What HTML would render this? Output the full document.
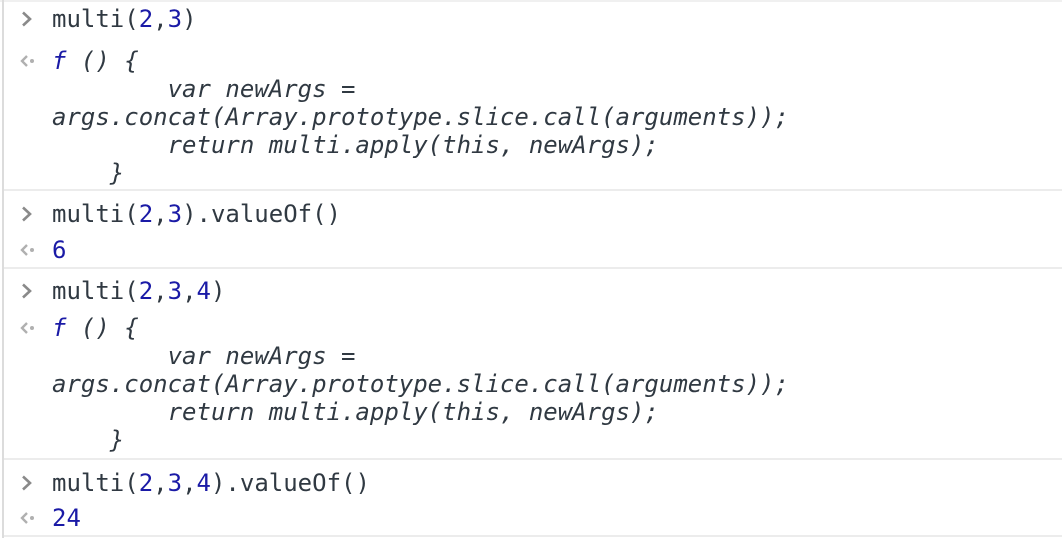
<!DOCTYPE html>
<html><head><meta charset="utf-8"><style>
html,body{margin:0;padding:0;background:#fff;width:1062px;height:538px;overflow:hidden;position:relative}
.top{position:absolute;left:0;top:0;width:1062px;height:2px;background:#f0f0f0}
.lb{position:absolute;left:2px;top:0;width:2px;height:538px;background:#dcdcdc}
.sep{position:absolute;left:4px;width:1058px;height:2px;background:#ececec}
.l{position:absolute;left:52px;height:28px;line-height:28px;font-family:"DejaVu Sans Mono","Liberation Mono",monospace;font-size:24px;color:#303942;white-space:pre}
.i{font-style:italic}
.n{color:#1a1aa6}
.f{color:#1a1aa6;font-style:italic}
.p{position:absolute;left:18px;width:18px;height:28px}
</style></head><body>
<div class="top"></div><div class="lb"></div>

<svg class="p" style="top:5px" viewBox="0 0 18 28"><path d="M5 7.5 L12 14 L5 20.5" fill="none" stroke="#8a8a8a" stroke-width="2.6"/></svg>
<div class="l" style="top:5px">multi(<span class="n">2</span>,<span class="n">3</span>)</div>
<svg class="p" style="top:47px" viewBox="0 0 18 28"><path d="M9 9 L4 14 L9 19" fill="none" stroke="#b0b0b0" stroke-width="2.4"/><circle cx="14" cy="14" r="2" fill="#b0b0b0"/></svg>
<div class="l i" style="top:47px"><span class="f">f</span> () {</div>
<div class="l i" style="top:75px">        var newArgs =</div>
<div class="l i" style="top:103px">args.concat(Array.prototype.slice.call(arguments));</div>
<div class="l i" style="top:131px">        return multi.apply(this, newArgs);</div>
<div class="l i" style="top:159px">    }</div>
<div class="sep" style="top:189px"></div>

<svg class="p" style="top:200px" viewBox="0 0 18 28"><path d="M5 7.5 L12 14 L5 20.5" fill="none" stroke="#8a8a8a" stroke-width="2.6"/></svg>
<div class="l" style="top:200px">multi(<span class="n">2</span>,<span class="n">3</span>).valueOf()</div>
<svg class="p" style="top:236px" viewBox="0 0 18 28"><path d="M9 9 L4 14 L9 19" fill="none" stroke="#b0b0b0" stroke-width="2.4"/><circle cx="14" cy="14" r="2" fill="#b0b0b0"/></svg>
<div class="l n" style="top:236px">6</div>
<div class="sep" style="top:267px"></div>

<svg class="p" style="top:277px" viewBox="0 0 18 28"><path d="M5 7.5 L12 14 L5 20.5" fill="none" stroke="#8a8a8a" stroke-width="2.6"/></svg>
<div class="l" style="top:277px">multi(<span class="n">2</span>,<span class="n">3</span>,<span class="n">4</span>)</div>
<svg class="p" style="top:314px" viewBox="0 0 18 28"><path d="M9 9 L4 14 L9 19" fill="none" stroke="#b0b0b0" stroke-width="2.4"/><circle cx="14" cy="14" r="2" fill="#b0b0b0"/></svg>
<div class="l i" style="top:314px"><span class="f">f</span> () {</div>
<div class="l i" style="top:342px">        var newArgs =</div>
<div class="l i" style="top:370px">args.concat(Array.prototype.slice.call(arguments));</div>
<div class="l i" style="top:398px">        return multi.apply(this, newArgs);</div>
<div class="l i" style="top:426px">    }</div>
<div class="sep" style="top:458px"></div>

<svg class="p" style="top:469px" viewBox="0 0 18 28"><path d="M5 7.5 L12 14 L5 20.5" fill="none" stroke="#8a8a8a" stroke-width="2.6"/></svg>
<div class="l" style="top:469px">multi(<span class="n">2</span>,<span class="n">3</span>,<span class="n">4</span>).valueOf()</div>
<svg class="p" style="top:504px" viewBox="0 0 18 28"><path d="M9 9 L4 14 L9 19" fill="none" stroke="#b0b0b0" stroke-width="2.4"/><circle cx="14" cy="14" r="2" fill="#b0b0b0"/></svg>
<div class="l n" style="top:504px">24</div>
<div class="sep" style="top:535px"></div>
</body></html>
